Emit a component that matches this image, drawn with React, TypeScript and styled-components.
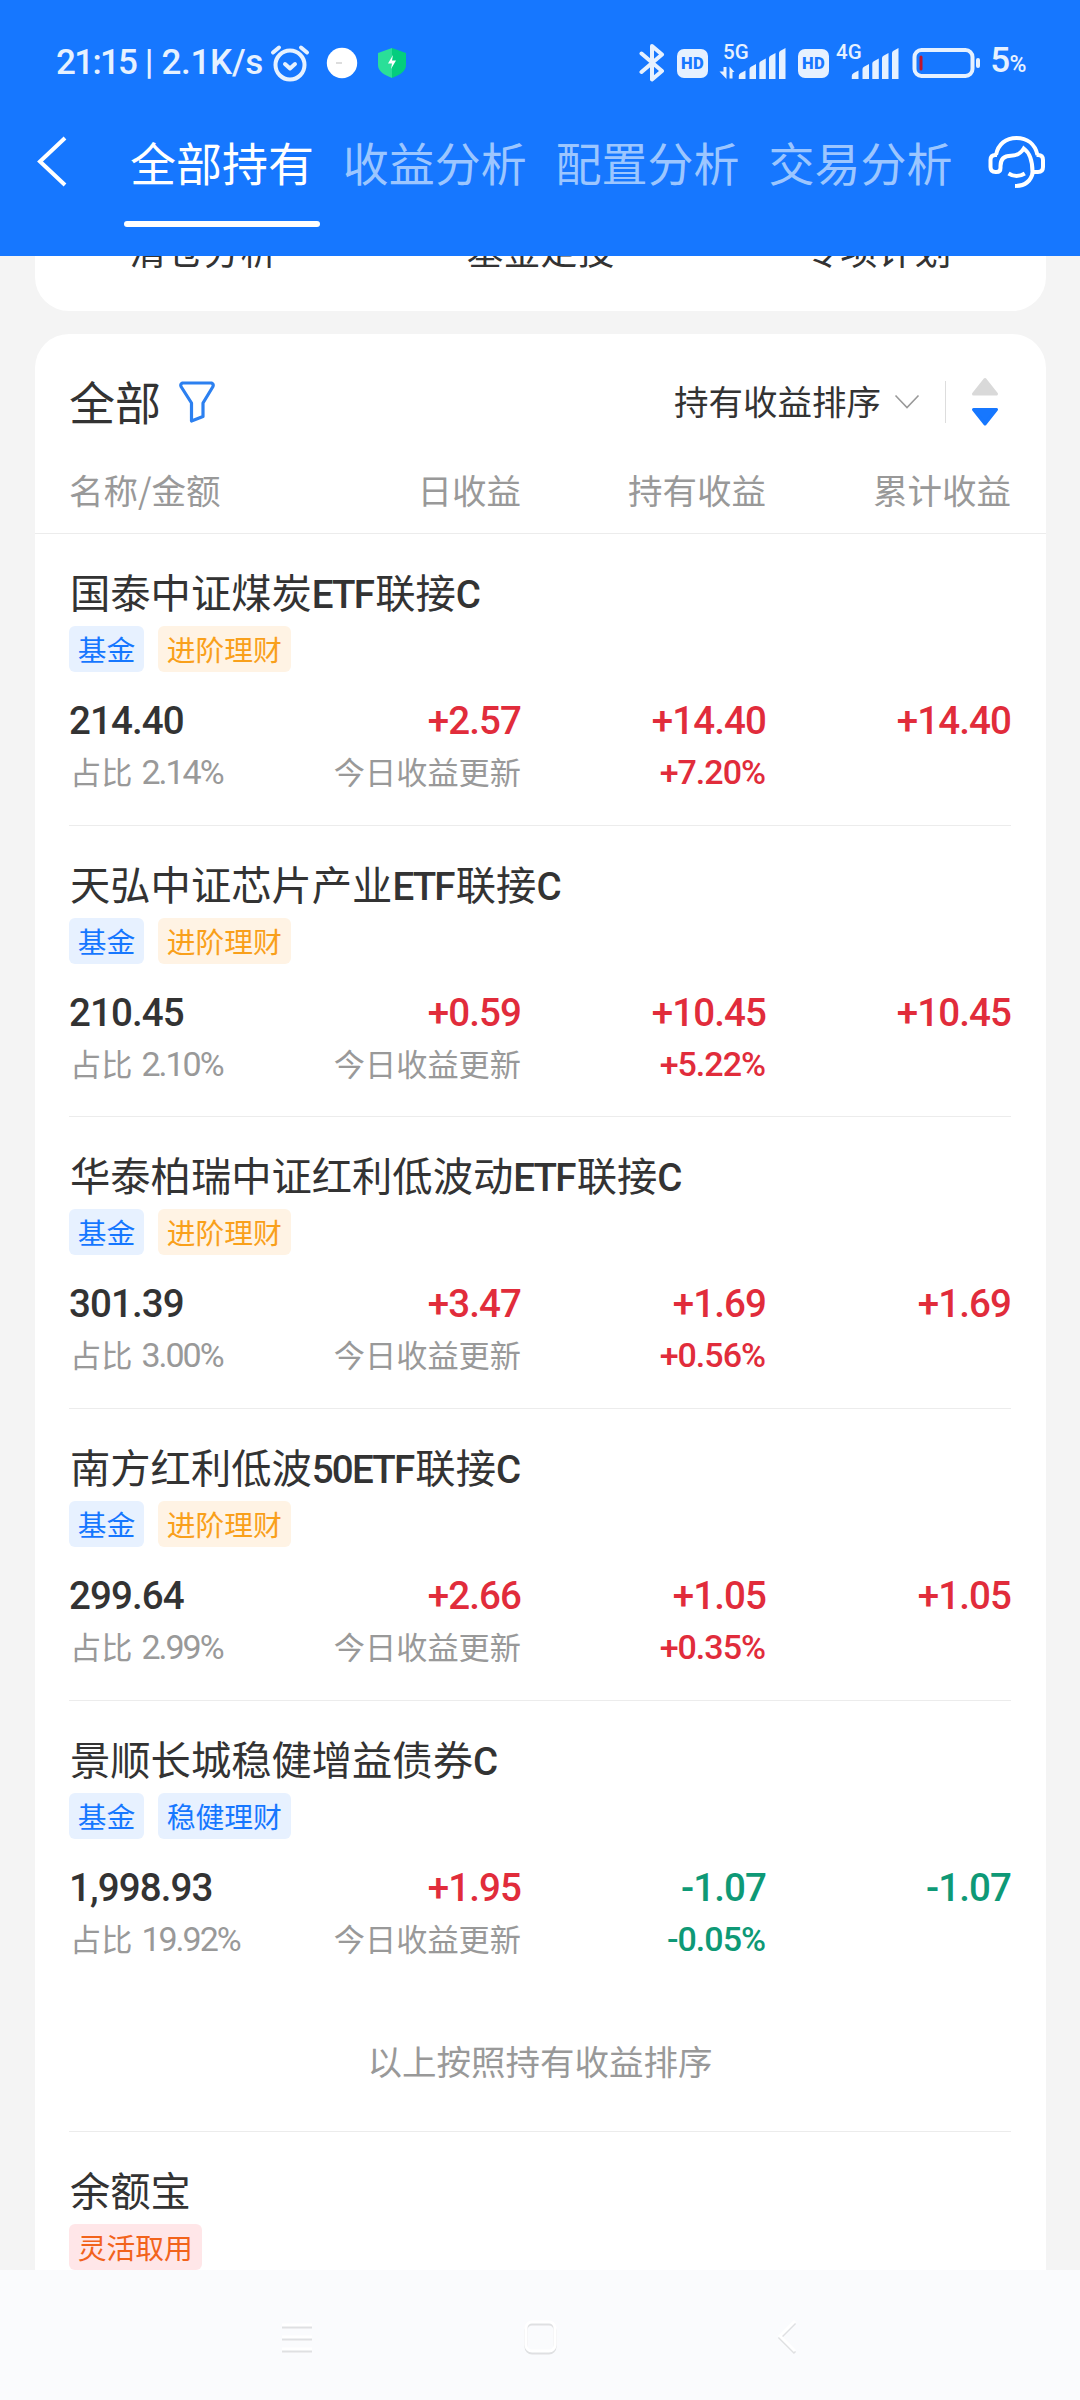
import React from "react";
import styled, { createGlobalStyle } from "styled-components";

const Global = createGlobalStyle`
  * { box-sizing: border-box; }
  html, body { margin: 0; padding: 0; background: #f4f4f4; }
  body { font-family: Roboto, "Noto Sans CJK SC", sans-serif; color: #333; }
`;

const CJK = `"Noto Sans CJK SC", sans-serif`;

const Screen = styled.div`
  width: 1080px;
  height: 2400px;
  display: flex;
  flex-direction: column;
  overflow: hidden;
  background: #f4f4f4;
`;

const Header = styled.header`
  flex: none;
  height: 256px;
  background: #1677ff;
  color: #fff;
`;

const StatusBar = styled.div`
  height: 106px;
  padding: 21px 54px 0 56px;
  display: flex;
  justify-content: space-between;
  color: #e6f1ff;
`;

const StatusGroup = styled.div`
  display: flex;
  align-items: center;
  height: 84px;
`;

const StatusText = styled.span<{ $spacing?: number }>`
  font: 500 35px/40px Roboto, sans-serif;
  letter-spacing: ${(p) => p.$spacing ?? 0}px;
  white-space: pre;
`;

const PercentSign = styled.span`
  font-size: 23px;
`;

const Spacer = styled.span<{ $w: number }>`
  flex: none;
  width: ${(p) => p.$w}px;
`;

const HdBadge = styled.span`
  flex: none;
  width: 31px;
  height: 29px;
  border-radius: 7px;
  background: #e6f1ff;
  color: #1677ff;
  font: 900 16.5px/29px Roboto, sans-serif;
  letter-spacing: 0.4px;
  text-align: center;
`;

const SignalIcon = styled.svg`
  flex: none;
  overflow: visible;
`;

const NavRow = styled.nav`
  height: 150px;
  padding-left: 36px;
  display: flex;
  align-items: flex-start;
`;

const BackIcon = styled.svg`
  margin: 29px 56px 0 0;
  flex: none;
`;

const Tab = styled.div<{ $active?: boolean }>`
  flex: none;
  width: 196px;
  height: 121px;
  margin-right: 16.8px;
  padding-top: 21px;
  font: 400 46px/68px ${CJK};
  text-align: center;
  white-space: nowrap;
  color: ${(p) => (p.$active ? "#fff" : "#9cc6ff")};
  &::after {
    content: "";
    display: block;
    height: 6px;
    margin-top: 26px;
    border-radius: 3px;
    background: ${(p) => (p.$active ? "#fff" : "transparent")};
  }
`;

const HeadsetIcon = styled.svg`
  flex: none;
  margin: 28px 0 0 11px;
`;

const Content = styled.main`
  height: 2014px;
  flex: none;
  padding: 0 34px 0 35px;
  overflow: hidden;
`;

const ShortcutCard = styled.section`
  height: 55px;
  margin-bottom: 23px;
  border-radius: 0 0 34px 34px;
  background: #fff;
  overflow: hidden;
  display: grid;
  grid-template-columns: repeat(3, 1fr);
`;

const Shortcut = styled.div`
  margin-top: -34px;
  font: 400 37px/54px ${CJK};
  text-align: center;
`;

const Card = styled.section`
  height: 2000px;
  border-radius: 34px 34px 0 0;
  background: #fff;
`;

const FilterRow = styled.div`
  height: 138px;
  padding: 0 46px 2px 34px;
  display: flex;
  align-items: center;
`;

const FilterTitle = styled.h2`
  margin: 0 0 4px;
  font: 400 46px/68px ${CJK};
`;

const FilterIcon = styled.svg`
  margin-left: 17px;
`;

const SortLabel = styled.div`
  margin: 0 0 5px auto;
  font: 400 34.5px/50px ${CJK};
`;

const SortChevron = styled.svg`
  margin: 0 25px 0 13px;
`;

const Separator = styled.span`
  width: 1px;
  height: 42px;
  background: #ddd;
  margin-right: 24px;
`;

const Columns = styled.div`
  display: grid;
  grid-template-columns: 207px 245px 245px 245px;
`;

const TableHead = styled(Columns)`
  height: 62px;
  padding: 0 35px 0 34px;
  border-bottom: 1px solid #ececec;
  font: 400 34.5px/50px ${CJK};
  color: #999;
  white-space: nowrap;
  & > span { margin-top: -8px; }
  & > span:not(:first-child) { text-align: right; }
`;

const Item = styled.article<{ $line?: boolean }>`
  height: 291.67px;
  margin: 0 35px 0 34px;
  padding-top: 27px;
  border-bottom: 1px solid ${(p) => (p.$line ? "#ececec" : "transparent")};
`;

const Name = styled.h3`
  margin: 0 0 6px;
  height: 59px;
  padding-left: 1px;
  font: 400 40.3px/59px ${CJK};
  white-space: nowrap;
`;

const Latin = styled.span`
  font: 500 38.5px/40px Roboto, sans-serif;
  letter-spacing: -1.8px;
  margin-right: 2px;
`;

const Tags = styled.div`
  display: flex;
  gap: 14px;
  height: 46px;
`;

const tones = {
  blue: ["#e7f1ff", "#1677ff"],
  orange: ["#fff3e4", "#f9a01b"],
  red: ["#ffe6e8", "#f2631b"],
} as const;

type Tone = keyof typeof tones;

const Tag = styled.span<{ $tone: Tone }>`
  height: 46px;
  padding: 0 8.7px;
  border-radius: 6px;
  background: ${(p) => tones[p.$tone][0]};
  color: ${(p) => tones[p.$tone][1]};
  font: 400 28.8px/46px ${CJK};
`;

const Figures = styled(Columns)`
  margin-top: 24px;
`;

const Cell = styled.div<{ $color?: string }>`
  text-align: right;
  white-space: nowrap;
  color: ${(p) => p.$color ?? "#333"};
  &:first-child { text-align: left; }
`;

const Amount = styled.div`
  font: 500 38.5px/49px Roboto, sans-serif;
  letter-spacing: -0.9px;
`;

const Percent = styled.div`
  font: 500 34px/54px Roboto, sans-serif;
  letter-spacing: -1px;
  padding-right: 1px;
`;

const Note = styled.div`
  font: 400 31.2px/52px ${CJK};
  color: #999;
`;

const Share = styled(Note)`
  padding-left: 1px;
`;

const ShareValue = styled.span`
  font: 400 34px/40px Roboto, sans-serif;
  letter-spacing: -2px;
  margin-left: 9px;
`;

const SortNote = styled.p`
  margin: 0 35px 0 34px;
  height: 139.5px;
  padding-top: 43px;
  border-bottom: 1px solid #ececec;
  font: 400 34.5px/50px ${CJK};
  text-align: center;
  color: #999;
`;

const SystemNav = styled.footer`
  flex: none;
  height: 130px;
  background: #fafbfd;
`;

const RED = "#e12c3b";
const GREEN = "#0e9976";

type Fund = {
  name: string;
  tag: string;
  tone: Tone;
  amount: string;
  share: string;
  day: string;
  held: string;
  rate: string;
  color: string;
};

const funds: Fund[] = [
  { name: "国泰中证煤炭ETF联接C", tag: "进阶理财", tone: "orange", amount: "214.40", share: "2.14%", day: "+2.57", held: "+14.40", rate: "+7.20%", color: RED },
  { name: "天弘中证芯片产业ETF联接C", tag: "进阶理财", tone: "orange", amount: "210.45", share: "2.10%", day: "+0.59", held: "+10.45", rate: "+5.22%", color: RED },
  { name: "华泰柏瑞中证红利低波动ETF联接C", tag: "进阶理财", tone: "orange", amount: "301.39", share: "3.00%", day: "+3.47", held: "+1.69", rate: "+0.56%", color: RED },
  { name: "南方红利低波50ETF联接C", tag: "进阶理财", tone: "orange", amount: "299.64", share: "2.99%", day: "+2.66", held: "+1.05", rate: "+0.35%", color: RED },
  { name: "景顺长城稳健增益债券C", tag: "稳健理财", tone: "blue", amount: "1,998.93", share: "19.92%", day: "+1.95", held: "-1.07", rate: "-0.05%", color: GREEN },
];

const FundName = ({ text }: { text: string }) => (
  <Name>
    {text.split(/([A-Z0-9]+)/).filter(Boolean).map((part, i) =>
      /^[A-Z0-9]/.test(part) ? <Latin key={i}>{part}</Latin> : part
    )}
  </Name>
);

const FundItem = ({ fund, line }: { fund: Fund; line: boolean }) => (
  <Item $line={line}>
    <FundName text={fund.name} />
    <Tags>
      <Tag $tone="blue">基金</Tag>
      <Tag $tone={fund.tone}>{fund.tag}</Tag>
    </Tags>
    <Figures>
      <Cell>
        <Amount>{fund.amount}</Amount>
        <Share>占比<ShareValue>{fund.share}</ShareValue></Share>
      </Cell>
      <Cell $color={RED}>
        <Amount>{fund.day}</Amount>
        <Note>今日收益更新</Note>
      </Cell>
      <Cell $color={fund.color}>
        <Amount>{fund.held}</Amount>
        <Percent>{fund.rate}</Percent>
      </Cell>
      <Cell $color={fund.color}>
        <Amount>{fund.held}</Amount>
      </Cell>
    </Figures>
  </Item>
);

const Signal = ({ label, data }: { label: string; data?: boolean }) => (
  <SignalIcon width="64" height="48" viewBox="0 -4 64 48" fill="#e6f1ff">
    <text x="0" y="16" fontFamily="Roboto" fontWeight="500" fontSize="20.5">{label}</text>
    {data && <path d="M.5 24h3v12l-7-7.500h4zM9.500 35.500h-3v-12l5 5.500h-2z" />}
    <path d="M15.800 36v-3q0-2 2-3l4.700-2.500V36z" />
    <path d="M26.500 36V26q0-1.500 1.500-2.300l5-2.700V36z" />
    <path d="M36.300 36V20.500q0-1.500 1.500-2.300l5-2.700V36z" />
    <path d="M46 36V15q0-1.500 1.500-2.300l5-2.700V36z" />
    <path d="M56 36V10q0-1.500 1.500-2.300l5-2.700V36z" />
  </SignalIcon>
);

export default function App() {
  return (
    <Screen>
      <Global />
      <Header>
        <StatusBar>
          <StatusGroup>
            <StatusText $spacing={-1.7}>21:15</StatusText>
            <StatusText $spacing={-0.3}> | 2.1K/s</StatusText>
            <Spacer $w={6} />
            <svg width="42" height="40" viewBox="0 0 42 40" fill="none" stroke="#e6f1ff" strokeWidth="4" strokeLinecap="round" strokeLinejoin="round">
              <circle cx="21" cy="22" r="14.5" />
              <path d="M4 9.500L10 4.500M38 9.500L32 4.500M16 21l5 4.500l5-4.500" />
            </svg>
            <Spacer $w={15} />
            <svg width="32" height="32" viewBox="0 0 32 32">
              <circle cx="16" cy="16" r="15.2" fill="#fff" />
              <path d="M10 16h6" stroke="#ddd" strokeWidth="2" />
            </svg>
            <Spacer $w={20} />
            <svg width="28" height="30" viewBox="0 0 28 30">
              <path d="M14 0L28 5v12c0 6-6 10-14 13z" fill="#04cd7e" />
              <path d="M14 0L0 5v12c0 6 6 10 14 13z" fill="#2adf98" />
              <path d="M15 7l-5 8.500h4l-1 5.500l5-8.500h-4z" fill="#fff" />
            </svg>
          </StatusGroup>
          <StatusGroup>
            <svg width="26" height="40" viewBox="0 0 26 40" fill="none" stroke="#e6f1ff" strokeWidth="4" strokeLinecap="round" strokeLinejoin="round">
              <path d="M2.500 10.500L23 28L13 36.500V3L23 11.500L2.500 29" />
            </svg>
            <Spacer $w={12} />
            <HdBadge>HD</HdBadge>
            <Spacer $w={15} />
            <Signal label="5G" data />
            <Spacer $w={11} />
            <HdBadge>HD</HdBadge>
            <Spacer $w={7} />
            <Signal label="4G" />
            <Spacer $w={12} />
            <svg width="70" height="32" viewBox="0 0 70 32">
              <rect x="2.500" y="3" width="58" height="26" rx="7" fill="none" stroke="#e6f1ff" strokeWidth="4" />
              <rect x="7.500" y="8.500" width="3" height="15" rx="1.500" fill="#c0142b" />
              <rect x="64" y="11" width="4" height="10" rx="2" fill="#e6f1ff" />
            </svg>
            <Spacer $w={8} />
            <StatusText $spacing={-0.5}>5<PercentSign>%</PercentSign></StatusText>
          </StatusGroup>
        </StatusBar>
        <NavRow>
          <BackIcon width="32" height="54" viewBox="0 0 32 54" fill="none" stroke="#fff" strokeWidth="4">
            <path d="M29 3L4 26.500L29 50" />
          </BackIcon>
          <Tab $active>全部持有</Tab>
          <Tab>收益分析</Tab>
          <Tab>配置分析</Tab>
          <Tab>交易分析</Tab>
          <HeadsetIcon width="62" height="56" viewBox="0 0 62 56" fill="none" stroke="#fff" strokeWidth="4">
            <path d="M10 21C12 10 20 4 30.500 4S49 10 51.500 21" />
            <path d="M11 21H9.500Q4.500 21 4.500 26V33Q4.500 38 9.500 38H10.500Q14.500 38 14.500 34V32C14.500 24 19 21.700 25 21.700C32 21.700 35 19 37.800 14.500C44 19 46.500 28 46.500 38H52Q57 38 57 33V26Q57 21 52 21H50.500" />
            <path d="M47 38C45 47 39 52 29 52M22.500 39.500Q30.500 44.500 38.800 39.500" />
          </HeadsetIcon>
        </NavRow>
      </Header>
      <Content>
        <ShortcutCard>
          <Shortcut>清仓分析</Shortcut>
          <Shortcut>基金定投</Shortcut>
          <Shortcut>专项计划</Shortcut>
        </ShortcutCard>
        <Card>
          <FilterRow>
            <FilterTitle>全部</FilterTitle>
            <FilterIcon width="38" height="44" viewBox="0 0 38 44" fill="none" stroke="#2c80f0" strokeWidth="3.2" strokeLinejoin="round">
              <path d="M4.500 3h29q2.500 1 1.500 3.500L25 23v13.500L13.500 41V23L3 6.500Q2 4 4.500 3z" />
            </FilterIcon>
            <SortLabel>持有收益排序</SortLabel>
            <SortChevron width="26" height="16" viewBox="0 0 26 16" fill="none" stroke="#999" strokeWidth="1.6">
              <path d="M1.500 1.500L13 13.500L24.500 1.500" />
            </SortChevron>
            <Separator />
            <svg width="30" height="50" viewBox="0 0 30 50" strokeWidth="3" strokeLinejoin="round">
              <path d="M15 2.500L26.500 17H3.500z" fill="#d9d9d9" stroke="#d9d9d9" />
              <path d="M15 47L26.500 32.500H3.500z" fill="#1677ff" stroke="#1677ff" />
            </svg>
          </FilterRow>
          <TableHead>
            <span>名称/金额</span>
            <span>日收益</span>
            <span>持有收益</span>
            <span>累计收益</span>
          </TableHead>
          {funds.map((fund, i) => (
            <FundItem key={fund.name} fund={fund} line={i < funds.length - 1} />
          ))}
          <SortNote>以上按照持有收益排序</SortNote>
          <Item>
            <Name>余额宝</Name>
            <Tags>
              <Tag $tone="red">灵活取用</Tag>
            </Tags>
          </Item>
        </Card>
      </Content>
      <SystemNav>
        <svg width="1080" height="130" viewBox="0 0 1080 130" fill="none">
          <g stroke="#dfe0e2" strokeWidth="3" transform="translate(0 2)">
            <path d="M282 55h30M282 67h30M282 79h30" />
            <rect x="526" y="52" width="29" height="29" rx="6" />
            <path d="M795 51L780 66L795 81" />
          </g>
          <g stroke="#fff" strokeWidth="3">
            <path d="M282 55h30M282 67h30M282 79h30" />
            <rect x="526" y="52" width="29" height="29" rx="6" />
            <path d="M795 51L780 66L795 81" />
          </g>
        </svg>
      </SystemNav>
    </Screen>
  );
}
